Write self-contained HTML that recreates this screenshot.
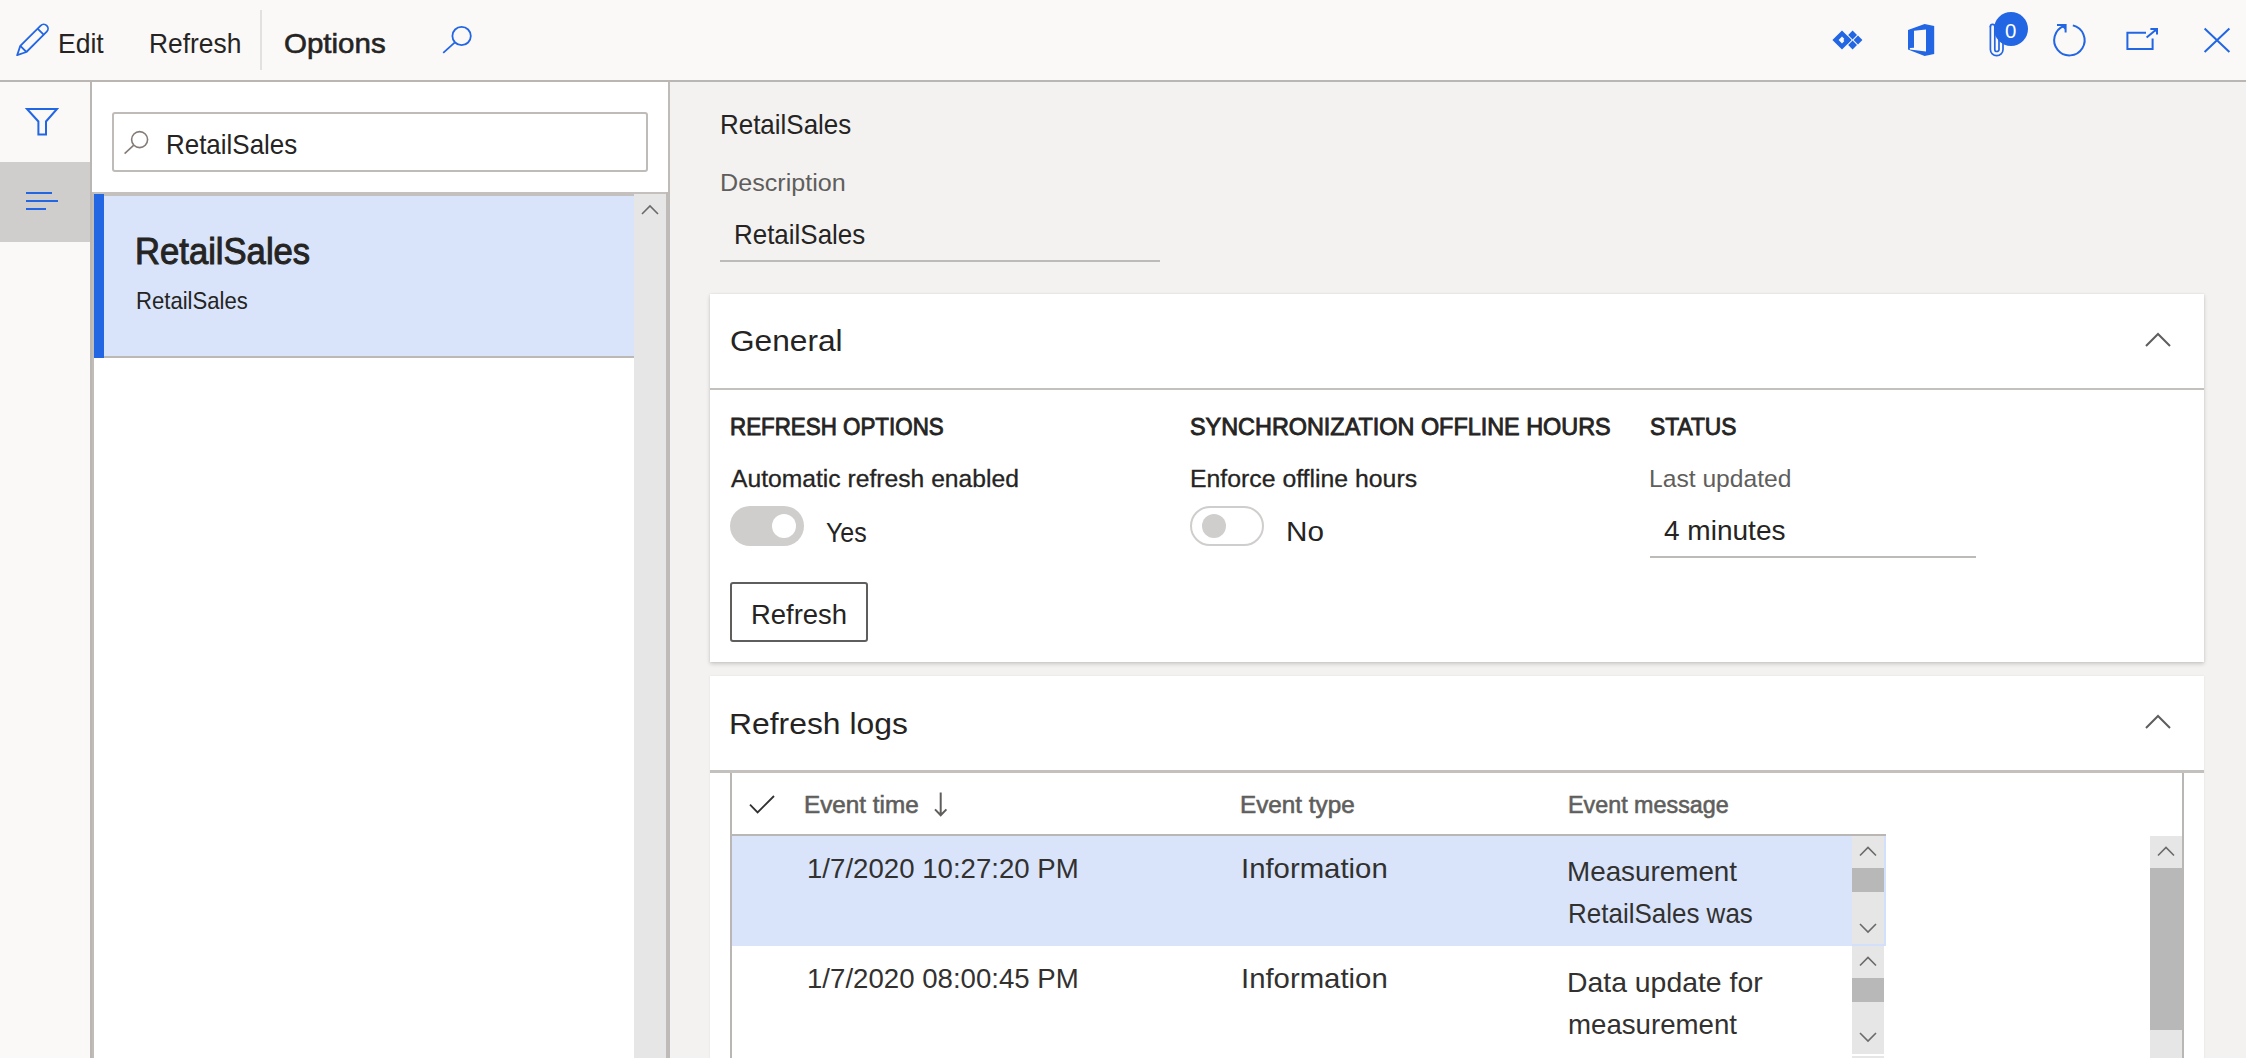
<!DOCTYPE html>
<html><head><meta charset="utf-8"><title>RetailSales</title>
<style>
html,body{margin:0;padding:0}
body{width:2246px;height:1058px;overflow:hidden;position:relative;background:#f3f2f1;font-family:"Liberation Sans",sans-serif}
.a{position:absolute}
.t{position:absolute;white-space:nowrap;line-height:1;transform-origin:0 0}
svg{position:absolute;left:0;top:0;overflow:visible}
</style></head><body>
<!-- top bar -->
<div class="a" style="left:0;top:0;width:2246px;height:80px;background:#faf9f8"></div>
<div class="a" style="left:0;top:80px;width:2246px;height:2px;background:#b9b6b3"></div>
<div class="a" style="left:260px;top:10px;width:2px;height:60px;background:#e3e1df"></div>
<!-- left nav -->
<div class="a" style="left:0;top:82px;width:90px;height:976px;background:#faf9f8"></div>
<div class="a" style="left:0;top:162px;width:90px;height:80px;background:#d0cecc"></div>
<div class="a" style="left:90px;top:82px;width:2px;height:976px;background:#b9b6b3"></div>
<!-- list pane -->
<div class="a" style="left:92px;top:82px;width:576px;height:976px;background:#ffffff"></div>
<div class="a" style="left:668px;top:82px;width:2px;height:976px;background:#bebbb8"></div>
<div class="a" style="left:112px;top:112px;width:532px;height:56px;border:2px solid #bebbb8;border-radius:3px;background:#fff"></div>
<div class="a" style="left:92px;top:192px;width:576px;height:2px;background:#c3c0bd"></div>
<div class="a" style="left:666px;top:192px;width:2px;height:866px;background:#bebbb8"></div>
<div class="a" style="left:634px;top:194px;width:32px;height:864px;background:#e6e6e6"></div>
<div class="a" style="left:94px;top:194px;width:540px;height:162px;background:#d9e4fa"></div>
<div class="a" style="left:104px;top:194px;width:530px;height:2px;background:#c3c0bd"></div>
<div class="a" style="left:94px;top:194px;width:10px;height:164px;background:#2266e3"></div>
<div class="a" style="left:92px;top:192px;width:2px;height:866px;background:#c0bcb8"></div>
<div class="a" style="left:104px;top:356px;width:530px;height:2px;background:#bcb9b5"></div>
<!-- card 1 -->
<div class="a" style="left:710px;top:294px;width:1494px;height:368px;background:#fff;box-shadow:0 2px 4px rgba(0,0,0,.17),0 0 2px rgba(0,0,0,.08)"></div>
<div class="a" style="left:710px;top:388px;width:1494px;height:2px;background:#c3c0bd"></div>
<!-- card 2 -->
<div class="a" style="left:710px;top:676px;width:1494px;height:400px;background:#fff;box-shadow:0 0 2px rgba(0,0,0,.08)"></div>
<div class="a" style="left:710px;top:770px;width:1494px;height:3px;background:#c3c0bd"></div>
<!-- description underline -->
<div class="a" style="left:720px;top:260px;width:440px;height:2px;background:#bdbab7"></div>
<!-- status underline -->
<div class="a" style="left:1650px;top:556px;width:326px;height:2px;background:#bdbab7"></div>
<!-- toggles -->
<div class="a" style="left:730px;top:506px;width:74px;height:40px;border-radius:20px;background:#d0cecc"></div>
<div class="a" style="left:772px;top:514px;width:24px;height:24px;border-radius:12px;background:#fff"></div>
<div class="a" style="left:1190px;top:506px;width:70px;height:36px;border:2px solid #d0cecc;border-radius:20px;background:#fff"></div>
<div class="a" style="left:1202px;top:514px;width:24px;height:24px;border-radius:12px;background:#d0cecc"></div>
<!-- button -->
<div class="a" style="left:730px;top:582px;width:134px;height:56px;border:2px solid #605e5c;border-radius:3px;background:#fff"></div>
<!-- grid -->
<div class="a" style="left:730px;top:773px;width:2px;height:285px;background:#b9b6b3"></div>
<div class="a" style="left:2182px;top:773px;width:2px;height:285px;background:#b9b6b3"></div>
<div class="a" style="left:732px;top:836px;width:1120px;height:110px;background:#d9e4fa"></div>
<div class="a" style="left:732px;top:834px;width:1154px;height:2px;background:#b9b6b3"></div>
<!-- inner scrollbars -->
<div class="a" style="left:1852px;top:836px;width:32px;height:110px;background:#e6e6e6"></div>
<div class="a" style="left:1884px;top:836px;width:2px;height:110px;background:#d3e0fb"></div>
<div class="a" style="left:1852px;top:944px;width:34px;height:2px;background:#d3e0fb"></div>
<div class="a" style="left:1852px;top:868px;width:32px;height:24px;background:#b8b8b8"></div>
<div class="a" style="left:1852px;top:946px;width:32px;height:108px;background:#e6e6e6"></div>
<div class="a" style="left:1852px;top:978px;width:32px;height:24px;background:#b8b8b8"></div>
<div class="a" style="left:1852px;top:1056px;width:32px;height:2px;background:#e6e6e6"></div>
<!-- outer scrollbar -->
<div class="a" style="left:2150px;top:836px;width:32px;height:222px;background:#e6e6e6"></div>
<div class="a" style="left:2150px;top:868px;width:32px;height:162px;background:#b8b8b8"></div>

<svg width="2246" height="1058" viewBox="0 0 2246 1058" fill="none">
<!-- pencil -->
<g transform="translate(33.25 39.05) rotate(45)" stroke="#2266e3" stroke-width="1.8" stroke-linejoin="round">
<path d="M-4.3,-14.8 A4.3,4.3 0 0 1 4.3,-14.8 L4.3,14 L0,22.8 L-4.3,14 Z"/>
<path d="M-4.3,-10.4 L4.3,-10.4 M-4.3,14 L4.3,14"/>
</g>
<!-- top search -->
<g stroke="#2266e3" stroke-width="1.8"><circle cx="461.6" cy="36" r="9.2"/><path d="M454.6,42.6 L443.2,52.8"/></g>
<!-- small search -->
<g stroke="#857b76" stroke-width="1.6"><circle cx="139.6" cy="139.6" r="8"/><path d="M133.8,145.2 L124.6,153.6"/></g>
<!-- filter -->
<path d="M27,109 L57,109 L46,121.5 L46,134.6 L38.4,134.6 L38.4,121.5 Z" stroke="#2266e3" stroke-width="2" stroke-linejoin="miter"/>
<!-- lines -->
<path d="M26,193 H52 M26,201 H58 M26,209 H46" stroke="#2266e3" stroke-width="2"/>
<!-- powerapps -->
<g fill="#2266e3">
<path d="M1832.4,40 L1842,30.4 L1851.6,40 L1842,49.6 Z M1838.6,40 L1842,43.4 L1845.4,40 L1842,36.6 Z" fill-rule="evenodd"/>
<path d="M1852.6,30.6 L1857,35 L1852.6,39.4 L1848.2,35 Z"/>
<path d="M1852.6,40.6 L1857,45 L1852.6,49.4 L1848.2,45 Z"/>
<path d="M1858,35.6 L1862.4,40 L1858,44.4 L1853.6,40 Z"/>
<path d="M1847.4,36 L1851.4,40 L1847.4,44 L1843.4,40 Z"/>
</g>
<!-- office -->
<path fill="#2266e3" fill-rule="evenodd" d="M1908,30 L1924.6,24 L1934.2,26 L1934.2,54 L1924.6,56 L1908,49.6 Z M1914,30.8 L1926,29.4 L1926,51.6 L1909.8,49.6 L1909.8,48 L1914,47.8 Z"/>
<!-- paperclip -->
<g stroke="#2266e3" stroke-width="1.7" stroke-linecap="round">
<path d="M1990.4,26.6 L1990.4,49.4 A6.3,6.3 0 0 0 2003,49.4 L2003,36"/>
<path d="M1994.8,26.6 L1994.8,49.4 A2.1,2.1 0 0 0 1999,49.4 L1999,38"/>
<path d="M1990.4,26.6 A2.2,2.2 0 0 1 1994.8,26.6"/>
</g>
<circle cx="2011" cy="29" r="17" fill="#2266e3"/>
<!-- refresh -->
<g stroke="#2266e3" stroke-width="2">
<path d="M2072.8,25.4 A15.2,15.2 0 1 1 2064,26"/>
<path d="M2057,25 L2065.6,25 L2065.6,32.6" stroke-linejoin="miter"/>
</g>
<path d="M2060.4,25 L2065.6,25 L2065.6,30.2 Z" fill="#2266e3"/>
<!-- popout -->
<g stroke="#2266e3" stroke-width="2">
<path d="M2146,32.8 L2127.4,32.8 L2127.4,49 L2152.6,49 L2152.6,38.4"/>
<path d="M2146.6,37.4 L2156.6,29.2"/>
<path d="M2150.4,29 L2157,29 L2157,34.6"/>
</g>
<path d="M2153,29 L2157,29 L2157,33 Z" fill="#2266e3"/>
<!-- close -->
<path d="M2204.6,28.6 L2229.4,52 M2229.4,28.6 L2204.6,52" stroke="#2266e3" stroke-width="2"/>
<!-- chevrons -->
<path d="M2146,346 L2158,334 L2170,346" stroke="#605e5c" stroke-width="2"/>
<path d="M2146,728 L2158,716 L2170,728" stroke="#605e5c" stroke-width="2"/>
<!-- check + arrow -->
<path d="M750,804.6 L757.6,812.4 L774,796" stroke="#323130" stroke-width="1.8"/>
<path d="M940.7,792.6 L940.7,815 M935,809.4 L940.7,815.2 L946.4,809.4" stroke="#605e5c" stroke-width="2"/>
<!-- scroll arrows -->
<g stroke="#6a6a6a" stroke-width="1.6">
<path d="M642,214 L650,206 L658,214"/>
<path d="M1860,855.5 L1868,847.5 L1876,855.5"/>
<path d="M1860,924 L1868,932 L1876,924"/>
<path d="M1860,965.5 L1868,957.5 L1876,965.5"/>
<path d="M1860,1033 L1868,1041 L1876,1033"/>
<path d="M2158,855.5 L2166,847.5 L2174,855.5"/>
</g>
</svg>
<div class="t" style="left:58.23px;top:29.44px;font-size:28.30px;color:#252423;transform:scaleX(0.9367)">Edit</div>
<div class="t" style="left:148.54px;top:29.44px;font-size:28.30px;color:#252423;transform:scaleX(0.9319)">Refresh</div>
<div class="t" style="left:284.22px;top:29.44px;font-size:28.30px;color:#252423;-webkit-text-stroke:0.6px #252423;transform:scaleX(1.0428)">Options</div>
<div class="t" style="left:719.57px;top:109.94px;font-size:28.30px;color:#252423;transform:scaleX(0.9168)">RetailSales</div>
<div class="t" style="left:719.64px;top:171.18px;font-size:24.60px;color:#605e5c;transform:scaleX(1.0222)">Description</div>
<div class="t" style="left:733.57px;top:219.74px;font-size:28.30px;color:#252423;transform:scaleX(0.9168)">RetailSales</div>
<div class="t" style="left:165.57px;top:129.84px;font-size:28.30px;color:#252423;transform:scaleX(0.9168)">RetailSales</div>
<div class="t" style="left:134.89px;top:234.19px;font-size:36.40px;color:#252423;-webkit-text-stroke:1.0px #252423;transform:scaleX(0.9515)">RetailSales</div>
<div class="t" style="left:135.87px;top:289.35px;font-size:24.40px;color:#252423;transform:scaleX(0.9060)">RetailSales</div>
<div class="t" style="left:730.12px;top:325.74px;font-size:30.20px;color:#252423;transform:scaleX(1.0487)">General</div>
<div class="t" style="left:729.85px;top:414.85px;font-size:24.40px;color:#252423;-webkit-text-stroke:0.9px #252423;transform:scaleX(0.9168)">REFRESH OPTIONS</div>
<div class="t" style="left:1189.87px;top:414.85px;font-size:24.40px;color:#252423;-webkit-text-stroke:0.9px #252423;transform:scaleX(0.9591)">SYNCHRONIZATION OFFLINE HOURS</div>
<div class="t" style="left:1649.89px;top:414.85px;font-size:24.40px;color:#252423;-webkit-text-stroke:0.9px #252423;transform:scaleX(0.9335)">STATUS</div>
<div class="t" style="left:731.40px;top:467.18px;font-size:24.60px;color:#252423;-webkit-text-stroke:0.3px #252423;transform:scaleX(1.0029)">Automatic refresh enabled</div>
<div class="t" style="left:1189.66px;top:466.88px;font-size:24.60px;color:#252423;-webkit-text-stroke:0.3px #252423;transform:scaleX(1.0086)">Enforce offline hours</div>
<div class="t" style="left:1649.17px;top:466.88px;font-size:24.60px;color:#605e5c;transform:scaleX(1.0018)">Last updated</div>
<div class="t" style="left:826.01px;top:517.54px;font-size:28.30px;color:#252423;transform:scaleX(0.8831)">Yes</div>
<div class="t" style="left:1286.28px;top:517.24px;font-size:28.30px;color:#252423;transform:scaleX(1.0482)">No</div>
<div class="t" style="left:1663.96px;top:515.84px;font-size:28.30px;color:#252423;transform:scaleX(0.9904)">4 minutes</div>
<div class="t" style="left:751.46px;top:599.64px;font-size:28.30px;color:#252423;transform:scaleX(0.9697)">Refresh</div>
<div class="t" style="left:729.11px;top:707.87px;font-size:30.40px;color:#252423;transform:scaleX(1.0482)">Refresh logs</div>
<div class="t" style="left:804.30px;top:792.95px;font-size:24.40px;color:#605e5c;-webkit-text-stroke:0.6px #605e5c;transform:scaleX(0.9949)">Event time</div>
<div class="t" style="left:1240.20px;top:792.95px;font-size:24.40px;color:#605e5c;-webkit-text-stroke:0.6px #605e5c;transform:scaleX(0.9956)">Event type</div>
<div class="t" style="left:1568.18px;top:793.05px;font-size:24.40px;color:#605e5c;-webkit-text-stroke:0.6px #605e5c;transform:scaleX(0.9559)">Event message</div>
<div class="t" style="left:806.57px;top:854.04px;font-size:28.30px;color:#323130;transform:scaleX(0.9759)">1/7/2020 10:27:20 PM</div>
<div class="t" style="left:1241.31px;top:853.84px;font-size:28.30px;color:#323130;transform:scaleX(1.0365)">Information</div>
<div class="t" style="left:1567.43px;top:857.24px;font-size:28.30px;color:#323130;transform:scaleX(0.9830)">Measurement</div>
<div class="t" style="left:1567.57px;top:899.24px;font-size:28.30px;color:#323130;transform:scaleX(0.9181)">RetailSales was</div>
<div class="t" style="left:806.57px;top:963.64px;font-size:28.30px;color:#323130;transform:scaleX(0.9759)">1/7/2020 08:00:45 PM</div>
<div class="t" style="left:1241.31px;top:964.04px;font-size:28.30px;color:#323130;transform:scaleX(1.0365)">Information</div>
<div class="t" style="left:1567.38px;top:967.64px;font-size:28.30px;color:#323130;transform:scaleX(1.0029)">Data update for</div>
<div class="t" style="left:1567.87px;top:1009.64px;font-size:28.30px;color:#323130;transform:scaleX(0.9770)">measurement</div>
<div class="t" style="left:2004.56px;top:21.07px;font-size:20.00px;color:#ffffff;transform:scaleX(1.0200)">0</div>
</body></html>
